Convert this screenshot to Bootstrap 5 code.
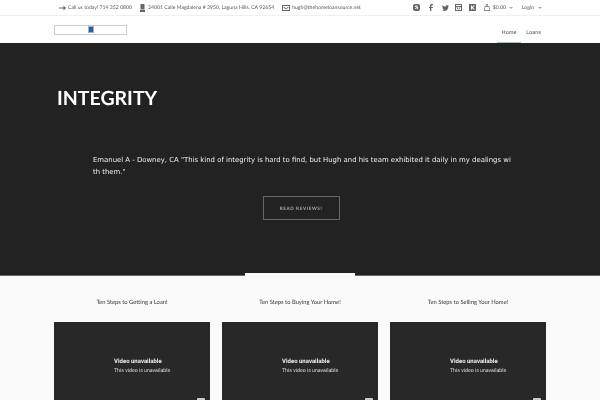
<!DOCTYPE html>
<html lang="en">
<head>
  <meta charset="UTF-8" />
  <title>The Home Loan Source</title>
  <link href="https://cdn.jsdelivr.net/npm/bootstrap@5.3.3/dist/css/bootstrap.min.css" rel="stylesheet">
  <style>
    html, body { overflow: hidden; height: 400px; }
    body { background: #fff; font-family: "Lato", sans-serif; text-rendering: geometricPrecision; }
    .wrap { width: 492px; margin: 0 auto; will-change: transform; }
    .topbar { height: 16px; padding-top: 1px; border-bottom: 1px solid #f0f0f0; font-size: 5.15px; color: #555; white-space: nowrap; }
    .topbar svg { display: block; flex: none; fill: #666; }
    .topleft { padding-left: 5px; }
    .top-txt { padding-top: 1px; }
    .caret-s { width: 0; height: 0; border-left: 2px solid transparent; border-right: 2px solid transparent; border-top: 2px solid #aaa; }
    .mainnav { height: 27px; }
    .logo-box { width: 73px; height: 10px; border: 1px solid #ccc; }
    .logo-box i { display: block; width: 6px; height: 7px; background: #2c5f8f; border: 1px solid #8fb6d6; }
    .menu-item { height: 27px; padding: 7px 5px 0; font-family: "Roboto", sans-serif; font-size: 5.4px; color: #555; line-height: 20px; }
    .menu-on { border-bottom: 1px solid #9fc4cc; }
    .hero { height: 233px; background: #222; border-bottom: 1px solid #666; position: relative; padding-top: 43px; }
    .hero h1 { font-family: "Lato", sans-serif; font-weight: 700; font-size: 19.5px; line-height: 26px; margin: 0 0 0 3px; color: #fff; }
    .hero-quote { width: 419px; margin: 42px 0 0 39px; font-family: "DejaVu Sans", sans-serif; font-size: 6.9px; line-height: 12px; color: #eee; word-break: break-all; }
    .btn-reviews { width: 77px; height: 24px; margin: 18px 0 0 2px; padding: 0; border: 1px solid #666; border-radius: 0; font-family: "Lato", sans-serif; font-size: 4.6px; font-weight: 700; letter-spacing: .6px; line-height: 22px; color: #aaa; }
    .notch { position: absolute; left: 245px; bottom: -1px; width: 110px; height: 3px; background: #fafafa; }
    .steps { height: 124px; background: #fafafa; }
    .steps .row { --bs-gutter-x: 12px; }
    .step-title { height: 46px; padding-top: 22px; font-size: 5.8px; line-height: 9px; color: #333; text-align: center; }
    .video { height: 88px; background: #282828; position: relative; padding: 35px 0 0 60px; font-family: "Roboto", sans-serif; color: #eee; }
    .video b { display: block; font-weight: 700; font-size: 6px; line-height: 9px; }
    .video span { display: block; padding-top: 1px; font-size: 5.2px; line-height: 9px; color: #ddd; }
    .video i { position: absolute; right: 5px; top: 76px; width: 8px; height: 6px; border-radius: 1px; background: #ccc; }
  </style>
</head>
<body>
  <div class="topbar">
    <div class="wrap h-100 d-flex align-items-center justify-content-between">
      <div class="topleft d-flex align-items-center">
        <svg width="7" height="6" viewBox="0 0 7 6" style="margin-right:2px"><path d="M0 2.500h4.500V.6L7 3 4.500 5.400V3.500H0z"/></svg>
        <span class="top-txt">Call us today! 714 352 0800</span>
        <svg width="5" height="8" viewBox="0 0 5 8" style="margin:0 3px 0 8px"><path d="M.5 0h4v5.500h-4zM0 6h5v2H0z"/></svg>
        <span class="top-txt">24001 Calle Magdalena # 3950, Laguna Hills, CA 92654</span>
        <svg width="8" height="6" viewBox="0 0 8 6" style="margin:0 2px 0 8px"><path fill-rule="evenodd" d="M0 0h8v6H0zM1 1v4h6V1zM1.500 1.500l2.500 2 2.500-2v1L4 4.500l-2.500-2z"/></svg>
        <span class="top-txt">hugh@thehomeloansource.net</span>
      </div>
      <div class="d-flex align-items-center">
        <svg width="7" height="7" viewBox="0 0 7 7"><path fill-rule="evenodd" d="M2 0a2 2 0 0 0-2 2v3a2 2 0 0 0 2 2h3a2 2 0 0 0 2-2V2a2 2 0 0 0-2-2zM1.800 2.300C1.800 1.500 5 1.200 5.200 2.500H4.200C3.800 2 2.800 2 3 2.600L5.200 3.600C5.800 5.200 2 5.800 1.700 4.300h1C3 5 4.200 5 4.100 4.400z"/></svg>
        <svg width="4" height="7" viewBox="0 0 4 7" style="margin-left:9px"><path d="M1 7V4H0V3h1V1.500C1 .5 1.700 0 2.500 0H4v1.200H3c-.5 0-.7.200-.7.600V3H4l-.2 1H2.300v3z"/></svg>
        <svg width="7" height="6" viewBox="0 0 7 6" style="margin-left:9px"><path d="M7 .8 6.200 1.100 6.800.300 6 .7C5 -.4 3.300.4 3.600 1.700 2.300 1.600 1.200 1 .5.200 0 1 .3 2 .9 2.400L.3 2.300C.3 3 .8 3.600 1.400 3.700H.8C1 4.300 1.600 4.700 2.200 4.700 1.500 5.200.7 5.400 0 5.300 3 7 6.400 5 6.300 1.500z"/></svg>
        <svg width="7" height="7" viewBox="0 0 7 7" style="margin-left:6px"><path fill-rule="evenodd" d="M0 0h7v7H0zM1 3v3h5V3H5.200a1.800 1.800 0 1 1-3.400 0zM3.500 2.800a1 1 0 1 0 .01 0zM1 1v1h5V1z"/></svg>
        <svg width="7" height="7" viewBox="0 0 7 7" style="margin-left:7px"><path fill-rule="evenodd" d="M0 0h7v7H0zM2 1.500v4h1V4l1.500 1.500H6L4 3.500 6 1.500H4.500L3 3V1.500z"/></svg>
        <svg width="6" height="7" viewBox="0 0 6 7" style="margin-left:8px"><path fill-rule="evenodd" d="M.8 2H1.800C1.800-.6 4.200-.6 4.200 2H5.200L6 7H0zM2.300 2h1.400C3.700.6 2.300.6 2.300 2zM1.200 2.800.8 6.200H5.200L4.800 2.800z"/></svg>
        <span class="top-txt" style="margin-left:3px">$0.00</span>
        <span class="caret-s" style="margin-left:3px"></span>
        <span class="top-txt" style="margin-left:9px">Login</span>
        <span class="caret-s" style="margin:0 4px 0 4px"></span>
      </div>
    </div>
  </div>

  <nav class="mainnav">
    <div class="wrap h-100 d-flex align-items-center justify-content-between">
      <div class="logo-box d-flex align-items-center justify-content-center"><i></i></div>
      <div class="d-flex">
        <a class="menu-item menu-on text-decoration-none">Home</a>
        <a class="menu-item text-decoration-none">Loans</a>
      </div>
    </div>
  </nav>

  <section class="hero">
    <div class="wrap">
      <h1>INTEGRITY</h1>
      <p class="hero-quote mb-0">Emanuel A - Downey, CA "This kind of integrity is hard to find, but Hugh and his team exhibited it daily in my dealings with them."</p>
      <div class="text-center"><a class="btn btn-reviews">READ REVIEWS!</a></div>
    </div>
    <div class="notch"></div>
  </section>

  <section class="steps">
    <div class="wrap">
      <div class="row">
        <div class="col-4">
          <div class="step-title">Ten Steps to Getting a Loan!</div>
          <div class="video"><b>Video unavailable</b><span>This video is unavailable</span><i></i></div>
        </div>
        <div class="col-4">
          <div class="step-title">Ten Steps to Buying Your Home!</div>
          <div class="video"><b>Video unavailable</b><span>This video is unavailable</span><i></i></div>
        </div>
        <div class="col-4">
          <div class="step-title">Ten Steps to Selling Your Home!</div>
          <div class="video"><b>Video unavailable</b><span>This video is unavailable</span><i></i></div>
        </div>
      </div>
    </div>
  </section>

  <script src="https://cdn.jsdelivr.net/npm/bootstrap@5.3.3/dist/js/bootstrap.bundle.min.js"></script>
</body>
</html>
